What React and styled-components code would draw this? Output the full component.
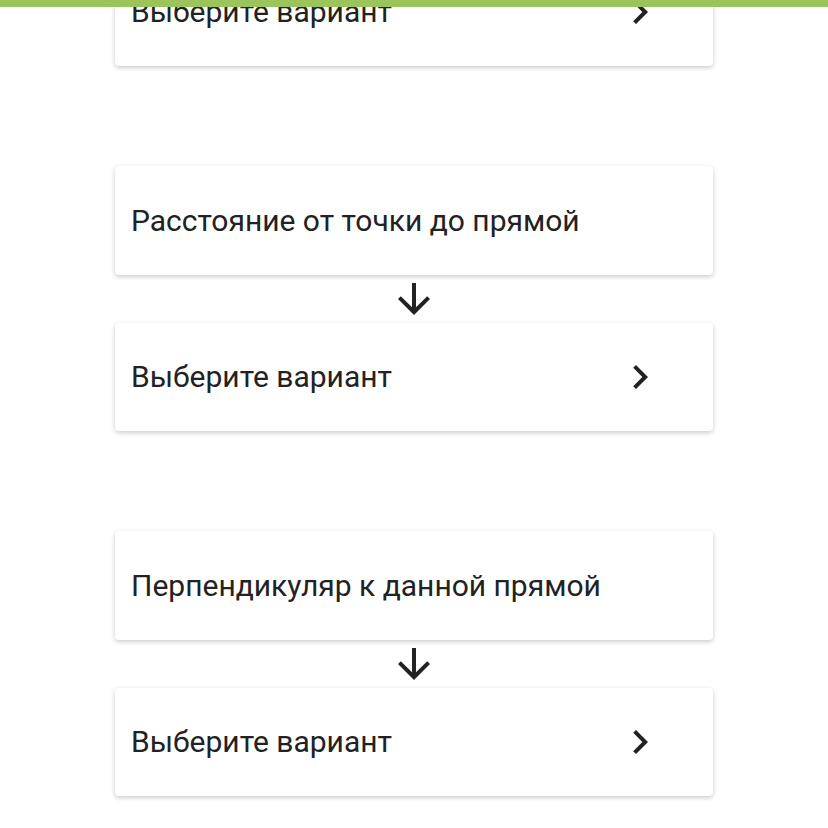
import React from 'react';
import styled, { createGlobalStyle } from 'styled-components';

const GlobalStyle = createGlobalStyle`
  html, body {
    margin: 0;
    padding: 0;
    background: #ffffff;
    font-family: Roboto, "Noto Sans", sans-serif;
    overflow: hidden;
  }
`;

const TopBar = styled.div`
  position: fixed;
  top: 0;
  left: 0;
  right: 0;
  height: 7px;
  background: #9bc55b;
  z-index: 10;
`;

const Screen = styled.div`
  width: 828px;
  height: 828px;
  overflow: hidden;
`;

const List = styled.div`
  display: flex;
  flex-direction: column;
  align-items: center;
  gap: 100px;
  margin-top: -42.5px;
`;

const Group = styled.div`
  display: flex;
  flex-direction: column;
  align-items: center;
`;

const Card = styled.div`
  box-sizing: border-box;
  width: 598px;
  height: 108.5px;
  flex-shrink: 0;
  background: #ffffff;
  border-radius: 4px;
  box-shadow: 0 2px 4px rgba(0, 0, 0, 0.14), 0 1px 6px rgba(0, 0, 0, 0.08);
  display: flex;
  align-items: center;
  justify-content: space-between;
  padding: 0 49px 0 16px;
`;

const Label = styled.span`
  font-size: 30px;
  color: #222222;
`;

const Arrow = styled.div`
  height: 48px;
  display: flex;
  align-items: center;
  justify-content: center;
`;

const ChevronRight = () => (
  <svg width="48" height="48" viewBox="0 0 24 24" fill="#222">
    <path d="M10 6L8.59 7.41 13.17 12l-4.58 4.59L10 18l6-6z" />
  </svg>
);

const ArrowDown = () => (
  <svg width="48" height="48" viewBox="0 0 24 24" fill="#222">
    <path d="M20 12l-1.41-1.41L13 16.17V4h-2v12.17l-5.58-5.59L4 12l8 8 8-8z" />
  </svg>
);

const SelectCard = () => (
  <Card>
    <Label>Выберите вариант</Label>
    <ChevronRight />
  </Card>
);

const tasks = ['Расстояние от точки до прямой', 'Перпендикуляр к данной прямой'];

export default function App() {
  return (
    <Screen>
      <GlobalStyle />
      <TopBar />
      <List>
        <SelectCard />
        {tasks.map((t) => (
          <Group key={t}>
            <Card>
              <Label>{t}</Label>
            </Card>
            <Arrow>
              <ArrowDown />
            </Arrow>
            <SelectCard />
          </Group>
        ))}
      </List>
    </Screen>
  );
}
